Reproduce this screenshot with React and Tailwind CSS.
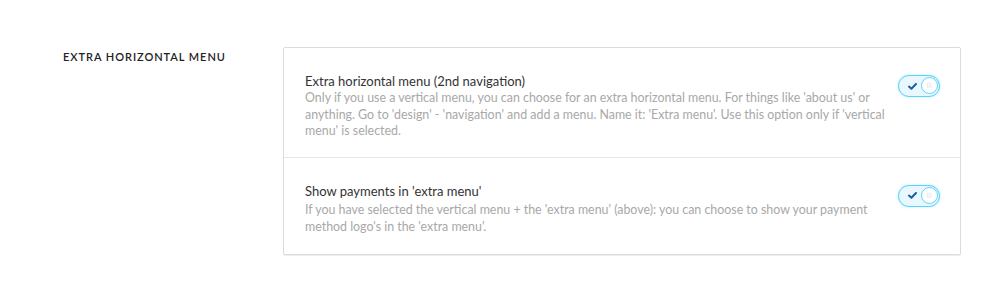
import React from "react";

const rows = [
  {
    title: "Extra horizontal menu (2nd navigation)",
    text: "Only if you use a vertical menu, you can choose for an extra horizontal menu. For things like 'about us' or anything. Go to 'design' - 'navigation' and add a menu. Name it: 'Extra menu'. Use this option only if 'vertical menu' is selected.",
  },
  {
    title: "Show payments in 'extra menu'",
    text: "If you have selected the vertical menu + the 'extra menu' (above): you can choose to show your payment method logo's in the 'extra menu'.",
  },
];

// toggle switch, always on here
const Toggle = () => (
  <div className="relative mt-[2px] flex h-[22px] w-[42px] shrink-0 items-center rounded-full border-[1.5px] border-[#5fd3f7] bg-[#e8f8fe] shadow-[0_0_2px_rgba(95,211,247,0.6)]">
    <svg className="ml-[9px]" width="9" height="7" viewBox="0 0 9 7">
      <path d="M1 3.6 L3.4 5.8 L8 1" fill="none" stroke="#1f5f9e" strokeWidth="2" strokeLinecap="round" strokeLinejoin="round" />
    </svg>
    <div className="absolute right-[1px] top-[1px] flex h-[17px] w-[17px] items-center justify-center rounded-full border border-[#5fd3f7] bg-white">
      <span className="text-[5px] leading-none tracking-[0.5px] text-[#ccc]">|||</span>
    </div>
  </div>
);

export default function App() {
  return (
    <div className="min-h-[295px] w-[1000px] bg-white pl-[63px] pt-[47px] font-['Lato','Noto_Sans',sans-serif]">
      <div className="flex">
        <div className="w-[220px] shrink-0 pt-[2px] text-[11px] font-semibold uppercase tracking-[0.95px] text-[#222]">
          Extra horizontal menu
        </div>
        <div className="w-[678px] rounded-[2px] border border-[#dcdcdc] bg-white shadow-[0_1px_1px_rgba(0,0,0,0.08)]">
          {rows.map((r, i) => (
            <div
              key={i}
              className={
                i > 0
                  ? "flex items-start justify-between border-t border-[#e6e6e6] pl-[21px] pr-[20px] pt-[25px] pb-[19px]"
                  : "flex items-start justify-between pl-[21px] pr-[20px] pt-[25px] pb-[17px]"
              }
            >
              <div className="w-[580px]">
                <div className="text-[13px] leading-[17px] text-[#333]">{r.title}</div>
                <div className={i > 0 ? "mt-[1px] text-[12.4px] leading-[17px] text-[#a8a8a8]" : "text-[12.4px] leading-[16.5px] text-[#a8a8a8]"}>{r.text}</div>
              </div>
              <Toggle />
            </div>
          ))}
        </div>
      </div>
    </div>
  );
}
